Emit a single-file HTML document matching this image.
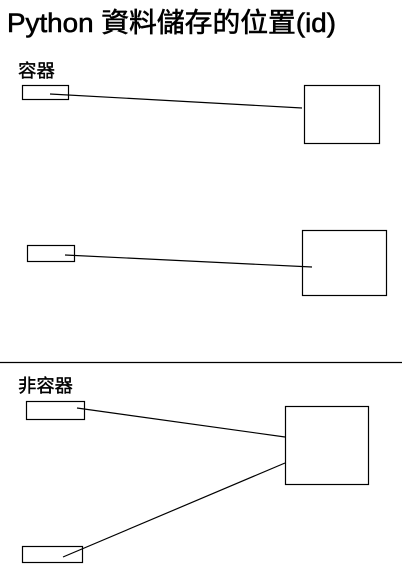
<!DOCTYPE html>
<html><head><meta charset="utf-8"><style>
html,body{margin:0;padding:0;background:#fff;width:402px;height:578px;overflow:hidden}
svg{display:block}
text{font-family:"Liberation Sans","Noto Sans CJK TC",sans-serif;fill:#000}
</style></head><body>
<svg width="402" height="578" viewBox="0 0 402 578" xmlns="http://www.w3.org/2000/svg">
<text x="7" y="32" font-size="27" stroke="#000" stroke-width="0.6" textLength="329" lengthAdjust="spacingAndGlyphs">Python 資料儲存的位置(id)</text>
<text x="18" y="77" font-size="18" stroke="#000" stroke-width="0.4" textLength="37" lengthAdjust="spacingAndGlyphs">容器</text>
<text x="18" y="392" font-size="18" stroke="#000" stroke-width="0.4" textLength="55" lengthAdjust="spacingAndGlyphs">非容器</text>
<g fill="none" stroke="#000" stroke-width="1.2">
<rect x="22.5" y="85.5" width="46" height="14"/>
<rect x="304.5" y="85.5" width="75" height="58"/>
<line x1="50" y1="94" x2="302" y2="108"/>
<rect x="27.5" y="245.5" width="47" height="16"/>
<rect x="302.5" y="230.5" width="84" height="65"/>
<line x1="65" y1="255" x2="312" y2="267"/>
<line x1="0" y1="362.5" x2="402" y2="362.5"/>
<rect x="26.5" y="401.5" width="58" height="18"/>
<rect x="285.5" y="406.5" width="83" height="78"/>
<line x1="77" y1="408" x2="285" y2="437"/>
<rect x="22.5" y="546.5" width="60" height="16"/>
<line x1="63" y1="557" x2="285" y2="463"/>
</g>
</svg>
</body></html>
